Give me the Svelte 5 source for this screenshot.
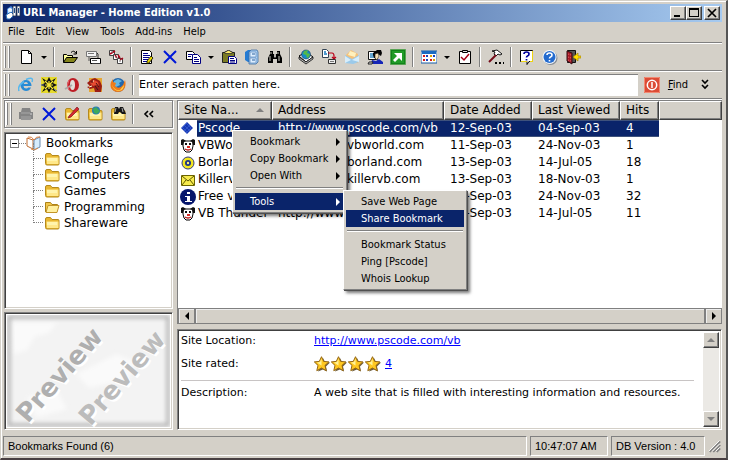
<script>
  const icons = {
    app: `<path d="M2 4l4-3 2 2v9l-4 2-2-2z" fill="#4d8ce0"/><path d="M3 4h4v7H3z" fill="#b9dcff"/><path d="M1 10l5-3 3 3-4 4H2z" fill="#fff" stroke="#246bb5"/><path d="M8 1h3v10H8zM12 1h3v10h-3z" fill="#fff" stroke="#20304f" stroke-width=".8"/><path d="M9 3h1v5H9zM13 3h1v5h-1z" fill="#234d88"/><circle cx="5" cy="5" r="2" fill="#e9f6ff"/>`,
    new: `<path d="M3.500 1.500h7l3 3v10h-10z" fill="#fff" stroke="#000"/><path d="M10.500 1.500v3h3" fill="none" stroke="#000"/>`,
    open: `<path d="M1.500 13.500v-8h3l1 1h5v2" fill="#ffff9c" stroke="#000"/><path d="M1.500 13.500l3-5h11l-3.500 5z" fill="#84841a" stroke="#000"/><path d="M9 3.500q3-3 5 1M14.500 2v3h-3" fill="none" stroke="#000"/>`,
    cards: `<path d="M1.500 2.500h10v5h-10z" fill="#f4f4f4" stroke="#777"/><path d="M3 4.500h6" stroke="#777"/><path d="M12 4l1 1v4" stroke="#333" fill="none"/><path d="M5.500 9.500h10v5h-10z" fill="#fff" stroke="#000"/><path d="M7 11.500h5" stroke="#555"/><path d="M4 8v4" stroke="#555"/><path d="M7 14h8v1H7z" fill="#333"/>`,
    links: `<g stroke="#444" fill="#fff"><path d="M1.500 1.500h5v5h-5z"/><path d="M5.500 5.500h5v5h-5z"/><path d="M9.500 9.500h5v5h-5z"/></g><path d="M2 5l5-3M7 6l2 3M10 6l2 3M12 11l3-2" stroke="#b00018" stroke-width="1.500"/><path d="M3 3h2M7 8h2M11 12h2" stroke="#777"/>`,
    edit: `<path d="M2.500 1.500h8l2 2v11h-10z" fill="#fff" stroke="#000"/><path d="M4 4.500h5M4 6.500h7M4 8.500h6M4 10.500h5M4 12.500h4" stroke="#00008b"/><path d="M8 12l4-5 2 2-4 5-2 .500z" fill="#e7d600" stroke="#000" stroke-width=".8"/>`,
    x: `<path d="M2 2l12 12M14 2L2 14" stroke="#0018d8" stroke-width="2"/>`,
    copy: `<path d="M1.500 2.500h6l2 2v6h-8z" fill="#fff" stroke="#000"/><path d="M3 5.500h4M3 7.500h3" stroke="#000080"/><path d="M7.500 5.500h5l3 3v6h-8z" fill="#fff" stroke="#000080"/><path d="M9 8.500h3M9 10.500h5M9 12.500h5" stroke="#000080"/>`,
    paste: `<path d="M1.500 3.500h12v10h-12z" fill="#7b7b25" stroke="#222"/><path d="M4 4.500h7v-2H9v-1H6v1H4z" fill="#ffed6b" stroke="#333" stroke-width=".8"/><path d="M7.500 7.500h6l2 2v5h-8z" fill="#fff" stroke="#000080"/><path d="M9 9.500h4M9 11.500h5M9 13h5" stroke="#000080"/>`,
    drives: `<path d="M1 3l3-2h5v12H4l-3-2z" fill="#247bd3"/><path d="M5 3l2-2h6l1 2v10l-2 2H5z" fill="#a9cff4" stroke="#3e6ca1" stroke-width=".8"/><path d="M6 3h6v5H6zM6 9h6v5H6z" fill="#dceeff" stroke="#6b93c2" stroke-width=".8"/><path d="M8 5h3M8 11h3" stroke="#285f9d"/>`,
    find: `<path d="M3 2h3v3h1v3h2V5h1V2h3v3l2 4v5h-5v-4H6v4H1V9l2-4z" fill="#000"/><path d="M4 3v2M11 3v2M3 7v5M12 7v5" stroke="#c9c7be"/><path d="M7 6h2M7 8h2" stroke="#999"/>`,
    earthbook: `<path d="M1 7l7-4 7 5-7 5z" fill="#fff" stroke="#000"/><path d="M1 8v2l7 5 7-5V8l-7 5z" fill="#b7b7b7" stroke="#111" stroke-width=".8"/><circle cx="8" cy="5.500" r="4.500" fill="#168ac5" stroke="#19375e" stroke-width=".6"/><path d="M6 2l4-1-1 3 3 1-1 3-2 1-1-3-3-1z" fill="#53b84a"/>`,
    transfer: `<path d="M1.500.500h4l2 2v6h-6z" fill="#fff" stroke="#345"/><path d="M3 3h2M3 5h3" stroke="#1679c0" stroke-width="1.500"/><path d="M7 4h4q2 0 2 3v2m-2-1l2 2 2-2" fill="none" stroke="#bb0018" stroke-width="1.200"/><path d="M7.500 10.500h7v4h-7z" fill="#eee" stroke="#333"/><path d="M9 12h4v1H9z" fill="#777"/>`,
    mail: `<path d="M2 6l5-5 7 4v9H3z" fill="#f4c17a"/><path d="M4 6l2-4 6 2-1 4z" fill="#fff1bd"/><path d="M1 6l7 4 7-4v7L9 15 1 14z" fill="#9bcaea"/><path d="M1 7l6 4-6 3zM15 7l-7 4 7 2z" fill="#d8eefb"/>`,
    person: `<path d="M1.500 2.500h9v8h-9z" fill="#fff" stroke="#111"/><path d="M3 4h4v5H3z" fill="#64a5cf"/><path d="M6 4l4-3h4l1 3-1 3-3-2-1 5-3-1-1-3z" fill="#050505"/><path d="M8 5l3-1 1 3-2 4-2-2z" fill="#f5deb5" stroke="#222" stroke-width=".6"/><path d="M4 15l1-4 4 1 3-2 4 3v2z" fill="#1525b7"/><path d="M2 13h4l-1 2H1z" fill="#ddd" stroke="#222"/>`,
    launch: `<path d="M.5.500h15v15H.5z" fill="#12831a" stroke="#59a354"/><path d="M2 2h12v12H2z" fill="#219b27"/><path d="M4 4h8v8l-3-3-4 4-2-2 4-4z" fill="#fff"/>`,
    calendar: `<path d="M0 2h16v12H0z" fill="#fff" stroke="#145ba5"/><path d="M1 2h14v3H1z" fill="#1b6bc0"/><g><path d="M2 6h2v2H2zM2 10h2v2H2zM9 10h2v2H9z" fill="#d51b1b"/><path d="M5 6h2v2H5zM12 6h2v2h-2zM5 10h2v2H5z" fill="#1843bd"/><path d="M9 6h2v2H9zM12 10h2v2h-2z" fill="#e0a400"/></g>`,
    check: `<path d="M2.500 2.500h11v12h-11z" fill="#fff" stroke="#000"/><path d="M5.500 3.500v-2h5v2z" fill="#ddd" stroke="#000"/><path d="M4 8l3 3 5-6" fill="none" stroke="#a40015" stroke-width="1.500"/>`,
    hammer: `<path d="M4 2l5-1 5 4-2 1-2-1-2 2-2-2 1-2z" fill="#fff" stroke="#000" stroke-width=".9"/><path d="M8 6L1 13" stroke="#740b18" stroke-width="2"/><path d="M7 14h2M11 14h2M15 14h1" stroke="#000" stroke-width="2"/>`,
    help: `<path d="M1.500 1.500h12v11H10l-2 3v-3H1.500z" fill="#fff" stroke="#000"/><path d="M2 12h6v1H2zM11 12h2V2h1v11h-3z" fill="#eed40f"/><path d="M5 5q0-2 2.500-2Q10 3 10 5q0 1.500-1.500 2-1 .500-1 1.500M7.500 10v1.500" fill="none" stroke="#00009c" stroke-width="1.700"/>`,
    helpblue: `<circle cx="8.500" cy="9" r="7" fill="#898f98"/><circle cx="7.500" cy="8" r="7" fill="#f7fbff"/><circle cx="7.500" cy="8" r="6" fill="#246bce"/><path d="M5 6q0-2 2.500-2Q10 4 10 6q0 1.500-1.500 2-1 .500-1 1.500M7.500 11v1.500" fill="none" stroke="#fff" stroke-width="1.600"/>`,
    exit: `<path d="M2.500 1.500h8v12h-8z" fill="#545454" stroke="#111"/><path d="M2 2l5 2v11l-5-3z" fill="#a81926" stroke="#341015"/><path d="M3 5l3 1M3 8l3 1M3 11l3 1" stroke="#e46d6b" stroke-dasharray="1"/><path d="M16 7h-3V4L8 8l5 4V9h3z" fill="#ffe000" stroke="#a48100" stroke-width=".7"/>`,
    ie: `<path d="M13 10.500Q11.500 14 8 14a5.500 5.500 0 1 1 5.500-5H5.500q.200 2.500 2.700 2.500 1.300 0 2-1zM5.700 7H10Q9.500 5 8 5 6 5 5.700 7z" fill="#288bd5" fill-rule="evenodd"/><path d="M1 14Q-1 9 6 4.500M8 2.500Q16-1 14 5" fill="none" stroke="#57b8ee" stroke-width="1.500"/>`,
    star: `<path d="M0 0h16v16H0z" fill="#e6da2c"/><path d="M1 1l5 3 2-4 2 4 5-3-3 5 4 2-4 2 3 5-5-3-2 4-2-4-5 3 3-5-4-2 4-2z" fill="#111"/><path d="M4 4l8 8M12 4l-8 8M8 4v8M4 8h8" stroke="#f8ea38" stroke-width="1.200"/><path d="M0 8h3M13 12l3 2" stroke="#6677a5"/>`,
    opera: `<ellipse cx="9" cy="8" rx="6" ry="7" fill="#bd1c25"/><ellipse cx="8.500" cy="8" rx="2.500" ry="5" fill="#e2dfda"/><path d="M1 12l7-4" stroke="#aaa" stroke-width="2"/><path d="M5 3q-3 5 0 10" fill="none" stroke="#e7646c"/>`,
    dragon: `<path d="M2 1h13v14H2z" fill="#e6a735"/><path d="M0 6l5-4 3-1 5 3 2 5-1 6H8l-1-4-4 1-3-2 3-1z" fill="#9c1e16"/><path d="M3 6l4-3 4 2 1 4-3-1-3 1z" fill="#e64b31"/><path d="M4 5h2M9 6l3 4M8 9l3 4" stroke="#421516"/><path d="M2 10l3-1M6 4h1" stroke="#fff6d2"/>`,
    firefox: `<circle cx="8" cy="8" r="7" fill="#2469ad"/><path d="M4 4l4-2 4 2-3 2 1 2-4 2-3-1z" fill="#65b6df"/><path d="M1 5L3 2v3l3 1-1 3q4 4 8-1l2-5q2 7-3 11-7 3-11-3-1-3 0-6z" fill="#ef7a19"/><path d="M2 7q2 7 8 6l4-5q0 5-5 6-6 0-7-7z" fill="#ffd14a"/>`,
    printer: `<path d="M4 2h8l1 4H3zM1 6h14v7H1z" fill="#858585"/><path d="M3 10h10v4H3z" fill="#969696"/><path d="M3 7h9" stroke="#a8a8a8"/><path d="M12 8h2" stroke="#d0d0d0"/>`,
    folder: `<path d="M1.500 4q0-1.500 1.500-1.500h3.500l1.500 2h6q1 0 1 1V13q0 1-1 1H3q-1.500 0-1.500-1.500z" fill="#e9b731" stroke="#b58a1c"/><path d="M2.500 6.500h12V13H3z" fill="#ffe88a"/><path d="M3 7h10v3H3z" fill="#fff4ad"/>`,
    folderopen: `<path d="M1.500 13V3.500h5l1.500 2h5.500V7" fill="#f2c74b" stroke="#ad8217"/><path d="M2 13.500L4 6.500h11l-2 7z" fill="#fff0a0" stroke="#c39527"/>`,
    book: `<path d="M1 3l6 2v9l-6-3z" fill="#fff" stroke="#bf6c31"/><path d="M8 5l6-3v10l-6 3z" fill="#d6ecfd" stroke="#6889ae"/><path d="M2 2q4-1 6 3 2-4 6-3" fill="none" stroke="#d77b3a"/><path d="M5 14l3 1 4-2" stroke="#df8b47" fill="none"/>`,
    diamond: `<path d="M7 1l6 6-6 6-6-6z" fill="#1537b4"/><path d="M4 4l6 6M6 2l5 5M2 6l5 5M4 10l6-6M2 7l5-5M6 12l5-5" stroke="#3f67d8" stroke-width=".6"/>`,
    dog: `<path d="M3 3h10v5l-1 4-2 2H6l-2-2-1-4z" fill="#fff" stroke="#000"/><path d="M1 2l2-1 3 2-2 1-1 3H1zM15 2l-2-1-3 2 2 1 1 3h2z" fill="#111"/><path d="M5 5h2v2H5zM9 5h2v2H9z" fill="#111"/><path d="M5 11q3 2 6 0" stroke="#bc1515" stroke-width="1.500" fill="none"/><path d="M7 8h3v2H7z" fill="#d92b24"/>`,
    ring: `<circle cx="8" cy="8" r="6" fill="#f2e620" stroke="#333c81"/><circle cx="8" cy="8" r="3" fill="#1b3488"/><circle cx="8" cy="8" r="1.200" fill="#fff26d"/>`,
    envelope: `<path d="M1.500 3.500h13v10h-13z" fill="#f7eb4d" stroke="#6c6400"/><path d="M2 4l6 5 6-5M2 13l4-5M14 13l-4-5" fill="none" stroke="#5c5600"/>`,
    info: `<circle cx="8" cy="8" r="8" fill="#06166c"/><path d="M7 3h3v2H7zM5 7h5v5h2v1H5v-1h2V8H5z" fill="#fff"/>`,
    pencilOver: `<path d="M5 10l8-9 2 2-8 8-3 1z" fill="#d7272e" stroke="#7d1620" stroke-width=".7"/>`,
    globeOver: `<circle cx="9" cy="4.500" r="4" fill="#2779b6"/><path d="M6 3l3-2 2 2 2 2-3 3-3-1z" fill="#40aa5a"/>`,
    findOver: `<path d="M5 1h3l1 2 1-2h3l3 7h-4l-2-2H9l-1 2H4z" fill="#161616"/><path d="M6 2l-1 4M12 2l1 4" stroke="#aaa"/>`,
    power: `<path d="M0 0h16v16H0z" fill="#dc4b35"/><path d="M.5.500h15v15H.5z" fill="none" stroke="#f28a73"/><circle cx="8" cy="8" r="4.700" fill="none" stroke="#fff" stroke-width="1.500"/><path d="M8 5v6" stroke="#fff" stroke-width="1.500"/>`,
    rate: `<path d="M9 2l2 4 5 .500-4 4 1 5-4-2-5 2 2-5-4-3 5-1z" fill="#6b5a3a"/><path d="M7.500.700l2.200 4.700 5.200.500-3.900 3.500 1.200 5.300L7.500 12l-4.700 2.700L4 9.400.3 5.900l5-.500z" fill="#ffc820" stroke="#946715"/><path d="M7.500 2.500v7L3 6.500l3-.500z" fill="#fff39a"/>`
  };

  const tools = ['new', 'v', '|', 'open', 'cards', 'links', '|', 'edit', 'x', 'copy', 'v', 'paste', 'drives', 'find', '|',
    'earthbook', 'transfer', 'mail', 'person', 'launch', '|', 'calendar', 'v', 'check', '|', 'hammer', '|', 'help', 'helpblue', 'exit'];
  const browsers = ['ie', 'star', 'opera', 'dragon', 'firefox'];
  const menus = ['File', 'Edit', 'View', 'Tools', 'Add-ins', 'Help'];
  const folders = ['College', 'Computers', 'Games', 'Programming', 'Shareware'];
  const rows = [
    ['diamond', 'Pscode', 'http://www.pscode.com/vb', '12-Sep-03', '04-Sep-03', '4'],
    ['dog', 'VBWorld', 'http://www.vbworld.com', '11-Sep-03', '24-Nov-03', '1'],
    ['ring', 'Borland', 'http://www.borland.com', '13-Sep-03', '14-Jul-05', '18'],
    ['envelope', 'Killervb', 'http://www.killervb.com', '13-Sep-03', '18-Nov-03', '1'],
    ['info', 'Free vb', 'http://www.freevb.com', '13-Sep-03', '24-Nov-03', '32'],
    ['dog', 'VB Thunder', 'http://www.vbthunder.com', '13-Sep-03', '14-Jul-05', '11']
  ];
  let query = $state('Enter serach patten here.');
  let selected = $state(0);
</script>

{#snippet icon(name)}
  <svg class="icon" viewBox="0 0 16 16" aria-hidden="true">{@html icons[name]}</svg>
{/snippet}

{#snippet arrow(d)}
  <svg class="arrow" viewBox="0 0 8 8" aria-hidden="true"><path {d} fill="currentColor" /></svg>
{/snippet}

<div class="window">
  <header class="title">
    {@render icon('app')}
    <h1>URL Manager - Home Edition v1.0</h1>
    <button class="cap" aria-label="Minimize"><svg viewBox="0 0 12 10"><path d="M2 7h6v2H2z" /></svg></button>
    <button class="cap" aria-label="Maximize"><svg viewBox="0 0 12 10"><path d="M1 0h10v9H1zM2 2v6h8V2z" fill-rule="evenodd" /></svg></button>
    <button class="cap close" aria-label="Close"><svg viewBox="0 0 12 10"><path d="M2 1l8 8M10 1L2 9" stroke="#000" stroke-width="1.700" /></svg></button>
  </header>

  <nav class="menubar">
    {#each menus as m}<button>{m}</button>{/each}
  </nav>

  <div class="toolbar">
    <span class="grip"></span>
    {#each tools as t}
      {#if t === '|'}
        <span class="sep"></span>
      {:else if t === 'v'}
        <button class="drop" aria-label="More options">{@render arrow('M1 3h6L4 6z')}</button>
      {:else}
        <button class="tool" aria-label={t}>{@render icon(t)}</button>
      {/if}
    {/each}
  </div>

  <div class="toolbar search">
    <span class="grip"></span>
    {#each browsers as b}<button class="tool" aria-label={b}>{@render icon(b)}</button>{/each}
    <span class="sep"></span>
    <input type="text" aria-label="Search pattern" bind:value={query} />
    <button class="tool" aria-label="Stop">{@render icon('power')}</button>
    <button class="find"><u>F</u>ind</button>
    <button class="tool" aria-label="Expand">
      <svg class="icon" viewBox="0 0 16 16"><path d="M5 3l3 3 3-3M5 8l3 3 3-3" fill="none" stroke="#000" stroke-width="1.600" /></svg>
    </button>
  </div>

  <main>
    <aside>
      <div class="sidebar-tools">
        <span class="grip"></span>
        <button class="tool" aria-label="Print" disabled>{@render icon('printer')}</button>
        <button class="tool" aria-label="Delete folder">{@render icon('x')}</button>
        {#each ['pencilOver', 'globeOver', 'findOver'] as o}
          <button class="tool" aria-label={o}>
            <svg class="icon" viewBox="0 0 16 16" aria-hidden="true">{@html icons.folder + icons[o]}</svg>
          </button>
        {/each}
        <span class="sep"></span>
        <button class="tool" aria-label="Collapse">
          <svg class="icon" viewBox="0 0 16 16"><path d="M7 5L4 8l3 3M12 5L9 8l3 3" fill="none" stroke="#000" stroke-width="1.600" /></svg>
        </button>
      </div>

      <div class="tree sunken">
        <div class="root"><span class="box"></span><span class="twig"></span>{@render icon('book')}<span>Bookmarks</span></div>
        <ul>
          {#each folders as f}
            <li>{@render icon(f === 'Programming' ? 'folderopen' : 'folder')}<span>{f}</span></li>
          {/each}
        </ul>
      </div>

      <div class="preview sunken">
        <svg viewBox="0 0 164 114" preserveAspectRatio="none" role="img" aria-label="Preview">
          <defs>
            <filter id="soft"><feGaussianBlur stdDeviation="2" /></filter>
          </defs>
          <rect width="164" height="114" fill="#f3f3f3" />
          <path d="M4 8h46l-8 10-14 4-8 14-14 4zM70 60l40-20 20 8-8 18-40 8zM20 84l30-8 10 20-30 8z" fill="#fafafa" filter="url(#soft)" />
          <rect x="2" y="2" width="160" height="110" fill="none" stroke="#aaa" stroke-width="3" filter="url(#soft)" />
          <g class="mark">
            <text transform="translate(23 113) rotate(-49)" fill="#fff">Preview</text>
            <text transform="translate(21 111) rotate(-49)" fill="#afafaf">Preview</text>
            <text transform="translate(86 116) rotate(-49)" fill="#fff">Preview</text>
            <text transform="translate(84 114) rotate(-49)" fill="#bcbcbc">Preview</text>
          </g>
        </svg>
      </div>
    </aside>

    <section>
      <div class="list">
        <table>
          <colgroup><col class="c1" /><col class="c2" /><col class="c3" /><col class="c3" /><col class="c4" /><col /></colgroup>
          <thead>
            <tr>
              <th>Site Na...<svg class="sort" viewBox="0 0 8 8"><path d="M0 6h8L4 2z" fill="#808080" /></svg></th>
              <th>Address</th><th>Date Added</th><th>Last Viewed</th><th>Hits</th><th aria-label="Blank"></th>
            </tr>
          </thead>
          <tbody>
            {#each rows as r, i}
              <tr class:selected={i === selected} onclick={() => (selected = i)}>
                <td class="site"><div>{@render icon(r[0])}<span>{r[1]}</span></div></td>
                <td>{r[2]}</td><td>{r[3]}</td><td>{r[4]}</td><td>{r[5]}</td><td class="rest"></td>
              </tr>
            {/each}
          </tbody>
        </table>
        <div class="hscroll">
          <button aria-label="Scroll left">{@render arrow('M6 0v8L2 4z')}</button>
          <span></span>
          <button aria-label="Scroll right">{@render arrow('M2 0v8l4-4z')}</button>
        </div>
      </div>

      <div class="details sunken">
        <div class="info">
          <dl>
            <dt>Site Location:</dt>
            <dd><a href="#site">http://www.pscode.com/vb</a></dd>
            <dt>Site rated:</dt>
            <dd class="stars">{#each [1, 2, 3, 4] as n (n)}{@render icon('rate')}{/each}<a href="#rating">4</a></dd>
          </dl>
          <hr />
          <dl>
            <dt>Description:</dt>
            <dd>A web site that is filled with interesting information and resources.</dd>
          </dl>
        </div>
        <div class="vscroll">
          <button aria-label="Scroll up">{@render arrow('M0 6h8L4 2z')}</button>
          <button aria-label="Scroll down">{@render arrow('M0 2h8L4 6z')}</button>
        </div>
      </div>

      <div class="popup first" role="menu">
        <button role="menuitem">Bookmark{@render arrow('M2 0v8l4-4z')}</button>
        <button role="menuitem">Copy Bookmark{@render arrow('M2 0v8l4-4z')}</button>
        <button role="menuitem">Open With{@render arrow('M2 0v8l4-4z')}</button>
        <hr />
        <button role="menuitem" class="on">Tools{@render arrow('M2 0v8l4-4z')}</button>
      </div>
      <div class="popup second" role="menu">
        <button role="menuitem">Save Web Page</button>
        <button role="menuitem" class="on">Share Bookmark</button>
        <hr />
        <button role="menuitem">Bookmark Status</button>
        <button role="menuitem">Ping [Pscode]</button>
        <button role="menuitem">Whois Lookup</button>
      </div>
    </section>
  </main>

  <footer>
    <span class="grow">Bookmarks Found (6)</span>
    <span class="time">10:47:07 AM</span>
    <span class="db">DB Version : 4.0</span>
    <svg viewBox="2 0 16 18" aria-hidden="true"><path d="M4 17L16 5M8 17l8-8M12 17l4-4" stroke="#808080" stroke-width="2" /><path d="M3 16L15 4M7 16l8-8M11 16l4-4" stroke="#fff" /></svg>
  </footer>
</div>

<style>
  :global(body) {
    margin: 0;
    background: #fff;
  }
  .window {
    box-sizing: border-box;
    min-height: 100vh;
    margin-right: 1px;
    padding: 2px 4px 2px 2px;
    display: flex;
    flex-direction: column;
    background: #d4d0c8;
    border: 1px solid #d4d0c8;
    border-right: 2px solid #555;
    border-bottom: 2px solid #483f42;
    box-shadow: inset 1px 1px #fff;
    font: 11px/16px "DejaVu Sans Condensed", "DejaVu Sans", sans-serif;
    color: #000;
  }
  button {
    box-sizing: border-box;
    margin: 0;
    padding: 0;
    border: 0;
    background: none;
    font: inherit;
    color: inherit;
  }
  .icon {
    display: block;
    flex: none;
    width: 16px;
    height: 16px;
  }
  .arrow {
    display: block;
    flex: none;
    width: 8px;
    height: 8px;
  }
  .title {
    display: flex;
    align-items: center;
    height: 18px;
    margin-top: 1px;
    padding: 0 2px;
    background: linear-gradient(90deg, #0a246a, #a6caf0);
    color: #fff;
  }
  h1 {
    flex: 1;
    margin: 0 0 0 2px;
    font: bold 11px/18px "DejaVu Sans Condensed", "DejaVu Sans", sans-serif;
  }
  .cap {
    width: 16px;
    height: 14px;
    background: #d4d0c8;
    border: 1px solid;
    border-color: #fff #404040 #404040 #fff;
    box-shadow: inset -1px -1px #808080;
  }
  .cap svg {
    display: block;
    width: 12px;
    height: 10px;
    margin: 1px;
  }
  .close {
    margin-left: 2px;
  }
  .menubar {
    display: flex;
    gap: 11px;
    height: 20px;
    padding-left: 5px;
  }
  .toolbar {
    box-sizing: border-box;
    display: flex;
    align-items: center;
    height: 28px;
    border-top: 1px solid #808080;
    box-shadow: inset 0 1px #fff;
    padding-top: 1px;
  }
  .grip {
    flex: none;
    box-sizing: border-box;
    width: 5px;
    height: 22px;
    margin: 0 2px;
    border: solid #808080;
    border-width: 0 1px;
    box-shadow: -1px 0 #fff, inset -1px 0 #fff;
  }
  .toolbar .grip {
    margin-right: 4px;
  }
  .tool {
    flex: none;
    display: grid;
    place-items: center;
    width: 23px;
    height: 22px;
  }
  .drop {
    display: grid;
    place-items: center;
    width: 13px;
    height: 22px;
  }
  .sep {
    flex: none;
    box-sizing: border-box;
    width: 2px;
    height: 20px;
    margin: 0 3px;
    border-left: 1px solid #808080;
    background: #fff;
  }
  .toolbar.search {
    border-bottom: 1px solid #808080;
    height: 29px;
    padding-right: 6px;
  }
  input {
    box-sizing: border-box;
    flex: 1;
    min-width: 0;
    height: 22px;
    margin: 0 2px;
    padding: 0 0 3px;
    border: 0;
    border-top: 1px solid #808080;
    background: #fff;
    font: 11px "DejaVu Sans", sans-serif;
    color: #000;
  }
  .find {
    width: 30px;
  }
  main {
    flex: 1;
    display: grid;
    grid-template-columns: 169px minmax(0, 1fr);
    gap: 4px;
    border-top: 1px solid #fff;
    margin-left: 1px;
  }
  aside {
    display: flex;
    flex-direction: column;
  }
  .sidebar-tools {
    box-sizing: border-box;
    display: flex;
    align-items: center;
    height: 28px;
    border: 1px solid #808080;
    box-shadow: inset 1px 1px #fff, 1px 1px #fff;
  }
  .sunken {
    box-sizing: border-box;
    background: #fff;
    border: 1px solid;
    border-color: #808080 #fff #fff #808080;
    box-shadow: inset 1px 1px #404040, inset -1px -1px #d4d0c8;
  }
  .tree {
    flex: 1;
    margin: 4px 0 3px;
    padding: 2px 2px 2px 5px;
    font: 12px/16px "DejaVu Sans", sans-serif;
  }
  .root {
    display: flex;
    align-items: center;
  }
  .root span:last-child {
    margin-left: 4px;
  }
  .box {
    box-sizing: border-box;
    width: 9px;
    height: 9px;
    border: 1px solid #808080;
    background: linear-gradient(#000, #000) center / 5px 1px no-repeat;
  }
  .twig {
    width: 7px;
    border-top: 1px dotted #808080;
  }
  ul {
    list-style: none;
    margin: 0;
    padding: 0 0 0 23px;
  }
  li {
    position: relative;
    display: flex;
    gap: 4px;
    padding-left: 11px;
  }
  li::before {
    content: "";
    position: absolute;
    left: 0;
    top: -8px;
    width: 10px;
    height: 16px;
    border: dotted #808080;
    border-width: 0 0 1px 1px;
    box-sizing: border-box;
  }
  .preview {
    height: 118px;
    padding: 2px;
  }
  .preview svg {
    display: block;
    width: 100%;
    height: 100%;
  }
  .mark {
    font: bold 26px "DejaVu Sans", sans-serif;
  }
  section {
    position: relative;
    display: flex;
    flex-direction: column;
  }
  .list {
    flex: 1;
    display: flex;
    flex-direction: column;
    justify-content: space-between;
    margin-bottom: 5px;
    background: #fff;
    border: solid #808080;
    border-width: 1px 0 0 1px;
    font: 12px/15px "DejaVu Sans", sans-serif;
  }
  table {
    width: 100%;
    table-layout: fixed;
    border-collapse: separate;
    border-spacing: 0;
  }
  .c1 { width: 94px; }
  .c2 { width: 172px; }
  .c3 { width: 88px; }
  .c4 { width: 39px; }
  th,
  td {
    box-sizing: border-box;
    height: 17px;
    padding: 0 0 0 6px;
    text-align: left;
    font-weight: normal;
    white-space: nowrap;
  }
  th {
    height: 19px;
    background: #d4d0c8;
    border: 1px solid;
    border-color: #fff #404040 #404040 #fff;
    box-shadow: inset -1px -1px #808080;
    padding-left: 5px;
  }
  .sort {
    float: right;
    width: 8px;
    height: 8px;
    margin: 3px 7px 0 0;
  }
  td.site {
    padding: 0 0 0 2px;
  }
  .site div {
    display: flex;
    align-items: center;
  }
  .site span {
    flex: 1;
    margin-left: 1px;
    padding: 0 0 0 1px;
    line-height: 17px;
  }
  .selected span,
  .selected td:not(.site, .rest) {
    background: #0a246a;
    color: #fff;
    box-shadow: inset 0 1px #3f527c, inset 0 -1px #3f527c;
  }
  .hscroll {
    display: flex;
    height: 16px;
  }
  .hscroll button,
  .hscroll span {
    box-sizing: border-box;
    display: grid;
    place-items: center;
    width: 17px;
    background: #d4d0c8;
    border: 1px solid #808080;
    box-shadow: inset 1px 1px #eee;
  }
  .hscroll span {
    flex: 1;
  }
  .details {
    display: flex;
    min-height: 101px;
    padding: 2px;
    font: 11px/16px "DejaVu Sans", sans-serif;
  }
  .info {
    flex: 1;
    padding: 1px 9px 0 1px;
  }
  dl {
    display: grid;
    grid-template-columns: 133px 1fr;
    row-gap: 7px;
    margin: 0;
  }
  dd {
    margin: 0;
  }
  a {
    color: #00f;
  }
  .stars {
    display: flex;
    gap: 1px;
  }
  .stars a {
    margin-left: 3px;
  }
  .info hr {
    height: 1px;
    margin: 8px 0 4px;
    border: 0;
    background: #c8c4c4;
  }
  .vscroll {
    display: flex;
    flex-direction: column;
    justify-content: space-between;
    width: 16px;
    background: #ebe9e5;
  }
  .vscroll button {
    display: grid;
    place-items: center;
    height: 16px;
    background: #d4d0c8;
    border: 1px solid;
    border-color: #fff #404040 #404040 #fff;
    box-shadow: inset -1px -1px #808080;
    color: #808080;
  }
  .popup {
    position: absolute;
    box-sizing: border-box;
    padding: 2px;
    background: #d4d0c8;
    border: 1px solid;
    border-color: #fff #808080 #808080 #fff;
    box-shadow: 1px 1px #505050, 3px 3px 3px #0008;
  }
  .popup button {
    display: flex;
    align-items: center;
    justify-content: space-between;
    width: 100%;
    height: 17px;
    padding: 0 2px 0 15px;
    white-space: nowrap;
  }
  .popup .on {
    background: #0a246a;
    color: #fff;
  }
  .popup hr {
    margin: 3px 1px 4px;
    border: 0;
    border-top: 1px solid #808080;
    border-bottom: 1px solid #fff;
  }
  .first {
    left: 55px;
    top: 30px;
    width: 115px;
  }
  .second {
    left: 166px;
    top: 90px;
    width: 124px;
  }
  footer {
    display: flex;
    gap: 3px;
    height: 20px;
    margin-top: 6px;
    font: 11px/18px "Liberation Sans", sans-serif;
  }
  footer span {
    box-sizing: border-box;
    padding-left: 4px;
    border: 1px solid;
    border-color: #808080 #fff #fff #808080;
    white-space: nowrap;
  }
  .grow { flex: 1; }
  .time { width: 78px; }
  .db { width: 94px; }
  footer svg {
    width: 14px;
    height: 18px;
  }
</style>
